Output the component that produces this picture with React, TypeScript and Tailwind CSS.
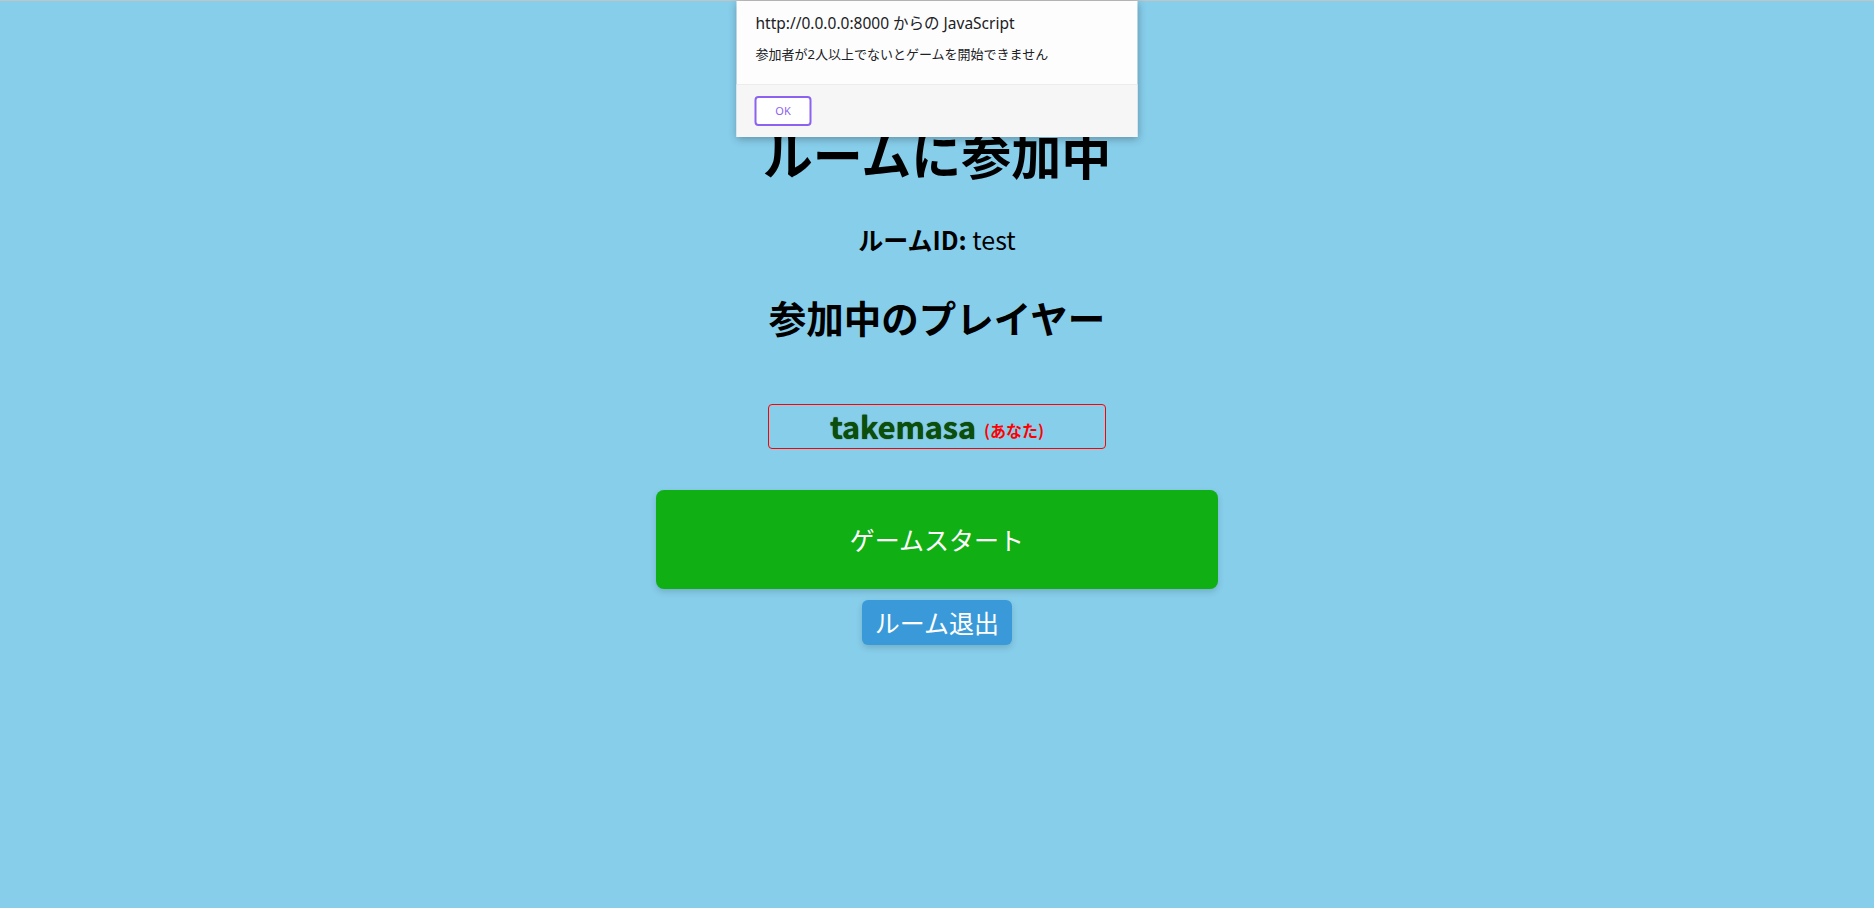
import React from "react";

export default function App() {
  const jp = { fontFamily: '"Noto Sans CJK JP", "Noto Sans", sans-serif' };
  return (
    <div className="relative min-h-[908px] w-full bg-[#87ceeb] border-t border-[#c4c4c4]" style={jp}>
      <div className="flex flex-col items-center pt-[121px]">
        <h1 className="text-[50px] font-bold leading-[62px] text-black">ルームに参加中</h1>
        <p className="mt-[39px] text-[25px] leading-[32px] text-black">
          <span className="font-bold">ルームID:</span> test
        </p>
        <h2 className="mt-[39px] text-[37.5px] font-bold leading-[46px] text-black">参加中のプレイヤー</h2>
        <div className="mt-[64px] flex h-[45px] w-[18%] items-center justify-center rounded-[4px] border border-[#ff0000]">
          <span
            className="text-[30.5px] font-bold leading-none text-[#0b4f0b]"
            style={{ textShadow: "0 0 1px #022a02" }}
          >
            takemasa
          </span>
          <span className="ml-[8px] mt-[6px] text-[16px] font-bold leading-none text-[#ff0000]">(あなた)</span>
        </div>
        <button className="mt-[41px] flex h-[99px] w-[30%] items-center justify-center rounded-[8px] bg-[#10af14] text-[25px] text-white shadow-[0_3px_6px_rgba(0,0,0,0.15)]">
          ゲームスタート
        </button>
        <button className="mt-[11px] flex h-[45px] w-[150px] items-center justify-center rounded-[6px] bg-[#3a9ad9] text-[25px] text-white shadow-[0_3px_6px_rgba(0,0,0,0.15)]">
          ルーム退出
        </button>
      </div>

      <div
        className="absolute left-1/2 top-0 w-[401px] -translate-x-1/2 bg-[#fdfdfd] shadow-[0_2px_8px_rgba(0,0,0,0.3)]"
        style={{ fontFamily: '"Noto Sans", "Noto Sans CJK JP", sans-serif' }}
      >
        <div className="h-[84px] border-b border-[#ececec] px-[19px] pt-[12px]">
          <div className="text-[15.5px] leading-[20px] text-[#202124]">http://0.0.0.0:8000 からの JavaScript</div>
          <div className="mt-[12px] text-[13px] leading-[18px] text-[#202124]">参加者が2人以上でないとゲームを開始できません</div>
        </div>
        <div className="h-[52px] bg-[#f6f6f6] px-[18px] pt-[11px]">
          <button className="flex h-[30px] w-[57px] items-center justify-center rounded-[4px] border-2 border-[#8b63f0] bg-white text-[11px] text-[#8b63f0]">
            OK
          </button>
        </div>
      </div>
    </div>
  );
}
